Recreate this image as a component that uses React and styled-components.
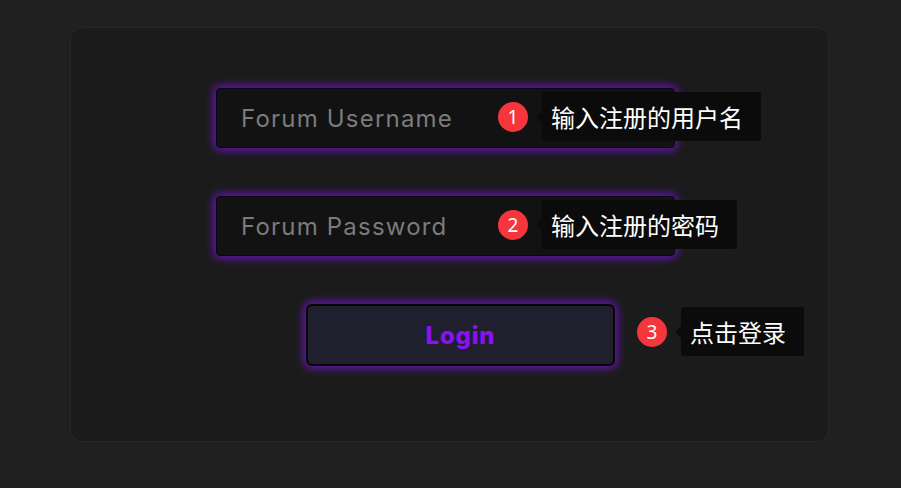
import React from 'react';
import styled, { createGlobalStyle } from 'styled-components';

const GlobalStyle = createGlobalStyle`
  html, body {
    margin: 0;
    padding: 0;
    background-color: #202020;
    font-family: Inter, "Noto Sans", "Noto Sans CJK SC", sans-serif;
  }
`;

const Page = styled.div`
  width: 901px;
  height: 488px;
  padding-top: 28px;
  box-sizing: border-box;
`;

const Card = styled.div`
  width: 757px;
  height: 413px;
  margin-left: 71px;
  box-sizing: border-box;
  padding: 60px 0 0 145px;
  background-color: #1b1b1b;
  border-radius: 12px;
  box-shadow: 0 0 3px rgba(60, 50, 110, 0.45);
  display: flex;
  flex-direction: column;
  gap: 48px;
`;

const Field = styled.div`
  position: relative;
  width: 459px;
  height: 60px;
`;

const glow = `
  box-shadow: 0 0 10px 2px rgba(125, 20, 225, 0.85);
`;

const Input = styled.input`
  width: 100%;
  height: 100%;
  box-sizing: border-box;
  padding: 0 0 0 24px;
  background-color: #121212;
  border: 1px solid #0c0414;
  border-radius: 4px;
  ${glow}
  font-family: Inter, sans-serif;
  font-size: 24px;
  letter-spacing: 1.2px;
  color: #ddd;
  outline: none;

  &::placeholder {
    color: #7b7b7b;
  }
`;

const ButtonRow = styled.div`
  position: relative;
  width: 309px;
  height: 62px;
  margin-left: 90px;
`;

const LoginButton = styled.button`
  width: 100%;
  height: 100%;
  background-color: #1f1f2d;
  border: 2px solid #050505;
  border-radius: 6px;
  ${glow}
  color: #8a12f2;
  font-family: Inter, sans-serif;
  font-weight: 800;
  font-size: 24px;
  letter-spacing: 0.8px;
  cursor: pointer;
`;

const Hint = styled.div`
  position: absolute;
  left: ${(p) => p.left}px;
  top: ${(p) => p.top}px;
  display: flex;
  align-items: center;
  gap: 14px;
  z-index: 2;
`;

const Badge = styled.div`
  width: 30px;
  height: 30px;
  border-radius: 50%;
  background-color: #f5363d;
  color: #fff;
  font-family: "Noto Sans", sans-serif;
  font-size: 19px;
  display: flex;
  align-items: center;
  justify-content: center;
`;

const Tip = styled.div`
  position: relative;
  height: 49px;
  padding: 0 18px 0 9px;
  background-color: #0b0b0b;
  border-radius: 3px;
  color: #fff;
  font-family: "Noto Sans CJK SC", "Noto Sans", sans-serif;
  font-size: 24px;
  line-height: 49px;
  white-space: nowrap;

  &::before {
    content: '';
    position: absolute;
    left: -6px;
    top: 50%;
    margin-top: -6px;
    border-top: 6px solid transparent;
    border-bottom: 6px solid transparent;
    border-right: 6px solid #0b0b0b;
  }
`;

const Hint_ = ({ n, text, left, top }) => (
  <Hint left={left} top={top}>
    <Badge>{n}</Badge>
    <Tip>{text}</Tip>
  </Hint>
);

function App() {
  return (
    <Page>
      <GlobalStyle />
      <Card>
        <Field>
          <Input placeholder="Forum Username" />
          <Hint_ n="1" text="输入注册的用户名" left={282} top={4} />
        </Field>
        <Field>
          <Input type="password" placeholder="Forum Password" />
          <Hint_ n="2" text="输入注册的密码" left={282} top={4} />
        </Field>
        <ButtonRow>
          <LoginButton>Login</LoginButton>
          <Hint_ n="3" text="点击登录" left={331} top={3} />
        </ButtonRow>
      </Card>
    </Page>
  );
}

export default App;
